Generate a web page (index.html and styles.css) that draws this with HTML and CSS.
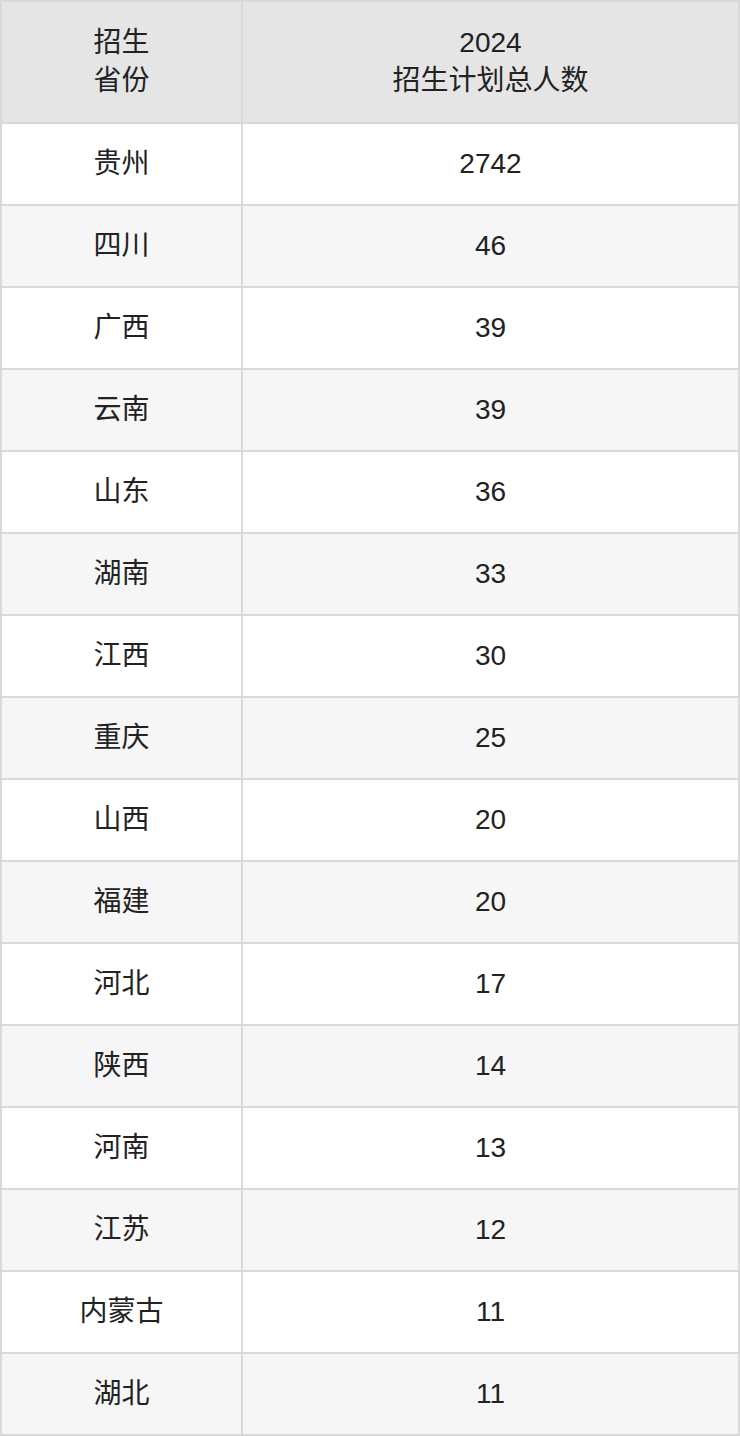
FILE: index.html
```html
<!DOCTYPE html>
<html lang="zh-CN">
<head>
<meta charset="utf-8">
<link rel="stylesheet" href="styles.css">
</head>
<body>
<table class="plan">
  <thead>
    <tr>
      <th class="col-prov">招生<br>省份</th>
      <th class="col-num">2024<br>招生计划总人数</th>
    </tr>
  </thead>
  <tbody>
    <tr><td>贵州</td><td>2742</td></tr>
    <tr><td>四川</td><td>46</td></tr>
    <tr><td>广西</td><td>39</td></tr>
    <tr><td>云南</td><td>39</td></tr>
    <tr><td>山东</td><td>36</td></tr>
    <tr><td>湖南</td><td>33</td></tr>
    <tr><td>江西</td><td>30</td></tr>
    <tr><td>重庆</td><td>25</td></tr>
    <tr><td>山西</td><td>20</td></tr>
    <tr><td>福建</td><td>20</td></tr>
    <tr><td>河北</td><td>17</td></tr>
    <tr><td>陕西</td><td>14</td></tr>
    <tr><td>河南</td><td>13</td></tr>
    <tr><td>江苏</td><td>12</td></tr>
    <tr><td>内蒙古</td><td>11</td></tr>
    <tr><td>湖北</td><td>11</td></tr>
  </tbody>
</table>
</body>
</html>
```
FILE: styles.css
```css
html, body {
  margin: 0;
  padding: 0;
  background: #ffffff;
}
.plan {
  width: 740px;
  border-collapse: collapse;
  table-layout: fixed;
  font-family: "Liberation Sans", "Noto Sans CJK SC", sans-serif;
  font-size: 28px;
  color: #222222;
}
.plan th,
.plan td {
  border: 2px solid #d9d9d9;
  text-align: center;
  vertical-align: middle;
  padding: 0;
}
.plan th {
  background: #e5e5e5;
  font-weight: normal;
  height: 120px;
  line-height: 38px;
}
.plan td {
  height: 80px;
  line-height: 30px;
}
.col-prov {
  width: 239px;
}
.plan tbody tr:nth-child(odd) td {
  background: #ffffff;
}
.plan tbody tr:nth-child(even) td {
  background: #f6f6f6;
}
```
